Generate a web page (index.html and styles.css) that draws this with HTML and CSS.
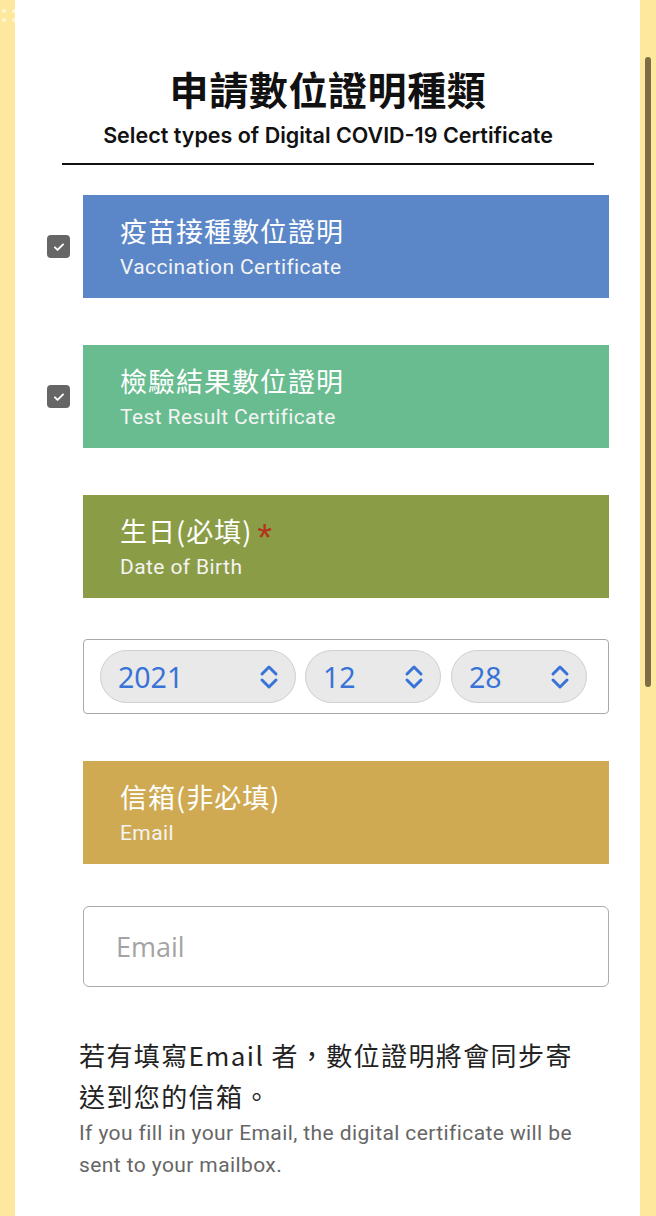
FILE: index.html
```html
<!DOCTYPE html>
<html lang="zh-Hant">
<head>
<meta charset="utf-8">
<title>申請數位證明種類</title>
<link rel="stylesheet" href="styles.css">
</head>
<body>
<div class="dots"><span></span><span></span><span></span><span></span></div>
<div class="scrollbar"></div>
<main class="page">
  <header class="head">
    <h1 class="title">申請數位證明種類</h1>
    <p class="subtitle">Select types of Digital COVID-19 Certificate</p>
  </header>

  <section class="form">
    <div class="row">
      <span class="check"><svg viewBox="0 0 24 24" width="14" height="14"><path d="M5 12.5l4.5 4.5L19 7.5" fill="none" stroke="#fff" stroke-width="3.2" stroke-linecap="round" stroke-linejoin="round"/></svg></span>
      <div class="card blue">
        <div class="zh">疫苗接種數位證明</div>
        <div class="en">Vaccination Certificate</div>
      </div>
    </div>

    <div class="row">
      <span class="check"><svg viewBox="0 0 24 24" width="14" height="14"><path d="M5 12.5l4.5 4.5L19 7.5" fill="none" stroke="#fff" stroke-width="3.2" stroke-linecap="round" stroke-linejoin="round"/></svg></span>
      <div class="card green">
        <div class="zh">檢驗結果數位證明</div>
        <div class="en">Test Result Certificate</div>
      </div>
    </div>

    <div class="row">
      <span class="nocheck"></span>
      <div class="card olive">
        <div class="zh">生日(必填)<span class="star">*</span></div>
        <div class="en">Date of Birth</div>
      </div>
    </div>

    <div class="row date-row">
      <span class="nocheck"></span>
      <div class="datebox">
        <div class="pill wide"><span>2021</span><svg viewBox="0 0 20 26" width="20" height="26"><path d="M3 10l7-7 7 7M3 16l7 7 7-7" fill="none" stroke="#3873d8" stroke-width="3" stroke-linecap="round" stroke-linejoin="round"/></svg></div>
        <div class="pill"><span>12</span><svg viewBox="0 0 20 26" width="20" height="26"><path d="M3 10l7-7 7 7M3 16l7 7 7-7" fill="none" stroke="#3873d8" stroke-width="3" stroke-linecap="round" stroke-linejoin="round"/></svg></div>
        <div class="pill"><span>28</span><svg viewBox="0 0 20 26" width="20" height="26"><path d="M3 10l7-7 7 7M3 16l7 7 7-7" fill="none" stroke="#3873d8" stroke-width="3" stroke-linecap="round" stroke-linejoin="round"/></svg></div>
      </div>
    </div>

    <div class="row">
      <span class="nocheck"></span>
      <div class="card mustard">
        <div class="zh">信箱(非必填)</div>
        <div class="en">Email</div>
      </div>
    </div>

    <div class="row email-row">
      <span class="nocheck"></span>
      <div class="emailbox">Email</div>
    </div>
  </section>

  <section class="note">
    <p class="note-zh">若有填寫Email 者，數位證明將會同步寄送到您的信箱。</p>
    <p class="note-en">If you fill in your Email, the digital certificate will be sent to your mailbox.</p>
  </section>
</main>
</body>
</html>
```

FILE: styles.css
```css
html, body {
  margin: 0;
  padding: 0;
}
body {
  background: #fde89e;
  width: 656px;
  height: 1216px;
  overflow: hidden;
  position: relative;
  font-family: Inter, "Noto Sans CJK TC", sans-serif;
}
.page {
  margin: 0 16px 0 15px;
  background: #fff;
  height: 1216px;
  box-sizing: border-box;
  padding-top: 63px;
}
.dots {
  position: absolute;
  left: 2px;
  top: 9px;
  display: grid;
  grid-template-columns: 6px 6px;
  gap: 5px 4px;
}
.dots span {
  width: 4px;
  height: 4px;
  border-radius: 50%;
  background: rgba(255, 255, 255, 0.55);
}
.scrollbar {
  position: absolute;
  left: 645px;
  top: 57px;
  width: 6px;
  height: 630px;
  border-radius: 3px;
  background: #7e6c45;
}
.head {
  margin: 0 46px 0 47px;
  border-bottom: 2px solid #111;
  text-align: center;
  padding-bottom: 9px;
}
.title {
  margin: 0;
  font-family: "Noto Sans CJK TC", sans-serif;
  font-weight: 700;
  font-size: 39px;
  line-height: 50px;
  color: #111;
  letter-spacing: 0.6px;
}
.subtitle {
  margin: 3px 0 0;
  font-size: 21.5px;
  font-weight: 600;
  line-height: 38px;
  color: #111;
}
.form {
  margin: 30px 31px 0 32px;
  display: flex;
  flex-direction: column;
  gap: 47px;
}
.row {
  display: grid;
  grid-template-columns: 36px 1fr;
  align-items: center;
}
.date-row { margin-top: -6px; }
.email-row { margin-top: -5px; }
.check {
  width: 23px;
  height: 23px;
  border-radius: 4px;
  background: #666;
  display: flex;
  align-items: center;
  justify-content: center;
}
.card {
  height: 103px;
  box-sizing: border-box;
  padding: 18px 20px 0 37px;
  color: #fff;
}
.card .zh {
  font-family: "Noto Sans CJK TC", sans-serif;
  font-size: 27px;
  line-height: 36px;
  letter-spacing: 1px;
}
.card .en {
  font-family: Roboto, "Noto Sans", sans-serif;
  font-size: 21px;
  line-height: 36px;
  letter-spacing: 0.4px;
  color: #f4f4f4;
}
.blue { background: #5b86c8; }
.green { background: #68bc8f; }
.olive { background: #8b9c46; }
.mustard { background: #cfaa52; }
.star {
  color: #b3341c;
  font-size: 38px;
  margin-left: 5px;
  font-family: "Liberation Sans", sans-serif;
  vertical-align: -9px;
  line-height: 20px;
}
.datebox {
  height: 75px;
  box-sizing: border-box;
  border: 1px solid #a9a9a9;
  border-radius: 4px;
  padding: 10px 21px 0 16px;
  display: flex;
  gap: 9px;
}
.pill {
  width: 136px;
  height: 53px;
  box-sizing: border-box;
  border: 1px solid #cfcfcf;
  border-radius: 27px;
  background: #e9e9e9;
  display: flex;
  align-items: center;
  justify-content: space-between;
  padding: 0 16px 0 17px;
  color: #3873d8;
  font-family: "Noto Sans", sans-serif;
  font-size: 28.5px;
}
.pill.wide { width: 196px; }
.pill + .pill + .pill { margin-left: 1px; }
.emailbox {
  height: 81px;
  box-sizing: border-box;
  border: 1.5px solid #ababab;
  border-radius: 6px;
  padding-left: 32px;
  display: flex;
  align-items: center;
  color: #a3a3a3;
  font-family: "Open Sans", sans-serif;
  font-size: 27px;
}
.note {
  margin: 47px 50px 0 64px;
}
.note-zh {
  margin: 0;
  font-family: "Noto Sans CJK TC", sans-serif;
  font-size: 26px;
  line-height: 41px;
  color: #222;
  letter-spacing: 1.4px;
}
.note-en {
  margin: 1px 0 0;
  font-family: Roboto, "Noto Sans", sans-serif;
  font-size: 21px;
  line-height: 32px;
  letter-spacing: 0.4px;
  color: #666;
}
```
